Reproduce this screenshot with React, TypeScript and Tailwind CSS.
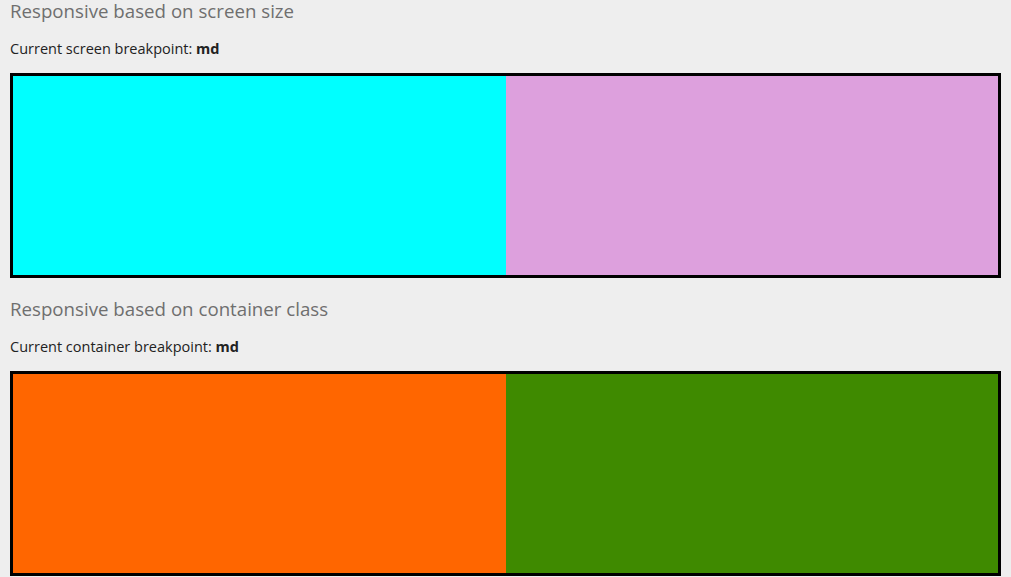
export default function App() {
  return (
    <div className="min-h-screen bg-[#eeeeee] px-[10px] font-['Open_Sans',sans-serif]">
      <section>
        <h2 className="text-[18.7px] leading-[22px] text-[#6f6f6f]">Responsive based on screen size</h2>
        <p className="mt-[16px] text-[14.5px] leading-[22px] text-[#222]">
          Current screen breakpoint: <b className="font-bold">md</b>
        </p>
        <div className="mt-[13px] flex h-[205px] border-[3px] border-black">
          <div className="flex-1 bg-[#00ffff]" />
          <div className="flex-1 bg-[#dda0dd]" />
        </div>
      </section>
      <section className="mt-[20px]">
        <h2 className="text-[18.7px] leading-[22px] text-[#6f6f6f]">Responsive based on container class</h2>
        <p className="mt-[16px] text-[14.5px] leading-[22px] text-[#222]">
          Current container breakpoint: <b className="font-bold">md</b>
        </p>
        <div className="mt-[13px] flex h-[205px] border-[3px] border-black">
          <div className="flex-1 bg-[#ff6600]" />
          <div className="flex-1 bg-[#3f8a00]" />
        </div>
      </section>
    </div>
  );
}
